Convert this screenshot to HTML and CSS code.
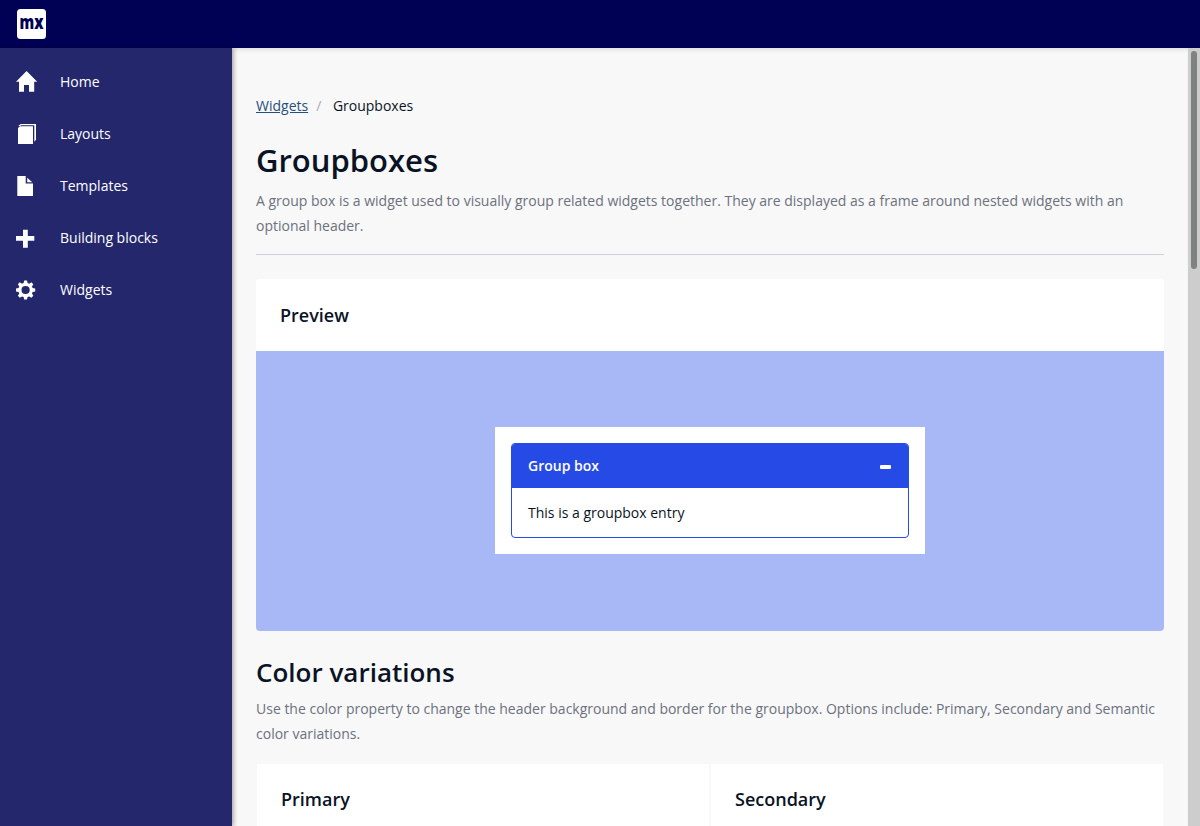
FILE: index.html
```html
<!DOCTYPE html>
<html lang="en">
<head>
<meta charset="utf-8">
<title>Groupboxes</title>
<link rel="stylesheet" href="styles.css">
</head>
<body>
<header class="topbar">
  <div class="logo"><svg class="logo-mark" viewBox="0 0 29 29" role="img"><text class="logo-text" x="2.6" y="20.300" textLength="24" lengthAdjust="spacingAndGlyphs">mx</text></svg></div>
</header>
<div class="shell">
  <nav class="sidebar">
    <a class="nav-item"><svg class="nav-icon" viewBox="0 0 22 22"><path d="M10.600 0 21.200 10.800H18.200V20.800H13V14H8V20.800H3V10.800H0Z"/></svg>Home</a>
    <a class="nav-item"><svg class="nav-icon" viewBox="0 0 22 22"><path d="M2 5 4 3.200H17V21H2ZM2.200 3 4.800 1H20V16.800L18.300 18.800V2.200H5L4.200 3Z"/></svg>Layouts</a>
    <a class="nav-item"><svg class="nav-icon" viewBox="0 0 22 22"><path d="M1.300 1H9.700V8.500H17V21H1.300ZM11.200 2.800 16.300 7.200H11.200Z"/></svg>Templates</a>
    <a class="nav-item"><svg class="nav-icon" viewBox="0 0 22 22"><path d="M7 2.700H11.800V9H18.300V13.700H11.800V20.800H7V13.700H0V9H7Z"/></svg>Building blocks</a>
    <a class="nav-item"><svg class="nav-icon" viewBox="0 0 22 22"><path transform="translate(0 .7)" fill-rule="evenodd" d="M8.200.8H11L11.600 3.300 13.200 4 15.400 2.600 17.300 4.500 16 6.700 16.600 8.300 19.200 8.900V11.700L16.600 12.300 16 13.900 17.300 16.100 15.400 18 13.200 16.700 11.600 17.300 11 19.900H8.200L7.600 17.300 6 16.700 3.800 18 1.900 16.100 3.200 13.900 2.600 12.300 0 11.700V8.900L2.600 8.300 3.200 6.700 1.900 4.500 3.800 2.600 6 4 7.600 3.300ZM9.600 6.200A4.100 4.100 0 1 0 9.600 14.400 4.100 4.100 0 1 0 9.600 6.200Z"/></svg>Widgets</a>
  </nav>
  <main class="content">
    <div class="breadcrumb"><a class="crumb-link">Widgets</a><span class="crumb-sep">/</span><span>Groupboxes</span></div>
    <h1 class="title">Groupboxes</h1>
    <p class="description">A group box is a widget used to visually group related widgets together. They are displayed as a frame around nested widgets with an optional header.</p>
    <hr class="divider">
    <section class="card">
      <h3 class="card-title">Preview</h3>
      <div class="preview">
        <div class="preview-inner">
          <div class="groupbox">
            <div class="groupbox-header"><span>Group box</span><span class="minus"></span></div>
            <div class="groupbox-body">This is a groupbox entry</div>
          </div>
        </div>
      </div>
    </section>
    <h2 class="subtitle">Color variations</h2>
    <p class="description">Use the color property to change the header background and border for the groupbox. Options include: Primary, Secondary and Semantic color variations.</p>
    <div class="variations">
      <h3 class="card-title variation">Primary</h3>
      <h3 class="card-title variation">Secondary</h3>
    </div>
  </main>
  <div class="scrollbar"><div class="scroll-thumb"></div></div>
</div>
</body>
</html>
```
FILE: styles.css
```css
* { box-sizing: border-box; }
body {
  margin: 0;
  height: 826px;
  overflow: hidden;
  display: flex;
  flex-direction: column;
  font: 14px/20px "Open Sans", sans-serif;
  color: #0a1325;
  background: #f8f8f8;
}
.topbar {
  height: 48px;
  flex: none;
  display: flex;
  align-items: center;
  padding-left: 17px;
  background: #000055;
}
.logo { width: 29px; height: 30px; border-radius: 3.5px; background: #fff; }
.logo-mark { display: block; width: 29px; height: 29px; overflow: visible; }
.logo-text { font: 800 20px "Open Sans", sans-serif; fill: #000055; }
.shell { flex: 1; min-height: 0; display: flex; }
.sidebar {
  width: 232px;
  flex: none;
  padding-top: 8px;
  background: #24276c;
  box-shadow: 2px 0 4px rgba(0, 0, 0, .3);
  z-index: 1;
}
.nav-item {
  height: 52px;
  display: flex;
  align-items: center;
  gap: 22px;
  padding-left: 16px;
  color: #fff;
}
.nav-icon { width: 22px; height: 22px; fill: #fff; }
.content {
  flex: 1;
  min-width: 0;
  overflow: hidden;
  padding: 48px 24px 0;
  box-shadow: inset 0 4px 4px -2px rgba(0, 0, 0, .1);
}
.breadcrumb { display: flex; }
.crumb-link { color: #264f7e; text-decoration: underline; }
.crumb-sep { margin: 0 11.6px 0 8px; color: #a9acb3; }
.title { margin: 24px 0 8px; font-size: 31px; line-height: 40px; font-weight: 600; }
.description { margin: 0; line-height: 25px; color: #6c717e; }
.divider { margin: 16px 0 24px; border: 0; border-top: 1px solid #ced0d3; }
.card { background: #fff; border-radius: 4px; overflow: hidden; }
.card-title { margin: 0; padding: 0 24px; font-size: 18px; line-height: 72px; font-weight: 600; }
.preview {
  height: 280px;
  display: flex;
  align-items: center;
  justify-content: center;
  padding-bottom: 1px;
  background: #a8b7f6;
}
.preview-inner { width: 430px; padding: 16px; background: #fff; }
.groupbox { border: 1px solid #264ae5; border-radius: 4px; overflow: hidden; }
.groupbox-header {
  height: 44px;
  display: flex;
  align-items: center;
  justify-content: space-between;
  padding: 0 17px 0 16px;
  font-weight: 600;
  color: #fff;
  background: #264ae5;
}
.minus { width: 11px; height: 4px; margin-top: 2px; border-radius: 1px; background: #fff; }
.groupbox-body { height: 49px; padding: 15px 16px; }
.subtitle { margin: 24px 0 7px; font-size: 26px; line-height: 34px; font-weight: 600; }
.variations {
  display: grid;
  grid-template-columns: 1fr 1fr;
  gap: 2px;
  margin-top: 18px;
  padding: 0 1px;
}
.variation { background: #fff; line-height: 70px; }
.scrollbar {
  width: 12px;
  flex: none;
  padding: 3px 3px 0;
  background: #cdcdcd;
}
.scroll-thumb { height: 218px; border-radius: 3px; background: #7e8281; }
```
